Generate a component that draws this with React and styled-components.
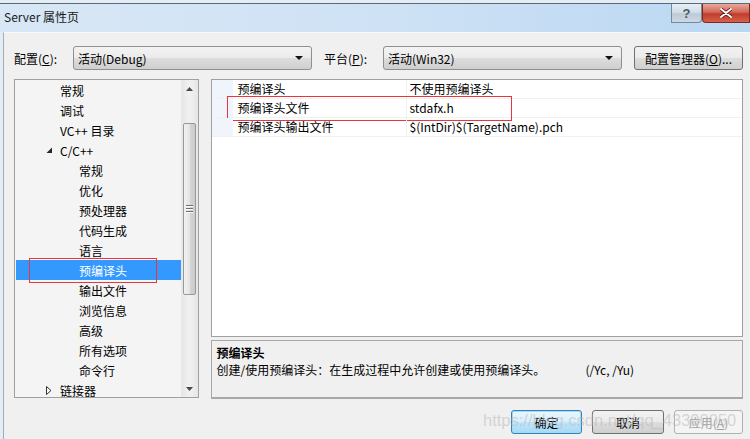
import React from "react";
import styled, { createGlobalStyle } from "styled-components";

const GlobalStyle = createGlobalStyle`
  html, body {
    margin: 0;
    padding: 0;
    background: #ffffff;
  }
  body {
    font-family: "Noto Sans CJK SC", "Noto Sans", sans-serif;
    font-size: 12px;
    color: #000;
  }
`;

const Page = styled.div`
  position: relative;
  width: 750px;
  height: 439px;
  overflow: hidden;
  background: #e4ecf4;
  display: flex;
  flex-direction: column;
`;

const TitleBar = styled.div`
  height: 28px;
  margin-top: 3px;
  border-top: 1px solid #5b6a78;
  background: linear-gradient(to right, #d8e7f5 0%, #cfe2f5 50%, #bad7f2 100%);
  display: flex;
  align-items: flex-start;
  padding-left: 4px;
`;

const TitleText = styled.div`
  line-height: 26px;
  color: #1a1a1a;
  flex: 1;
`;

const CaptionButton = styled.div`
  height: 18px;
  width: ${(p) => p.$w}px;
  display: flex;
  align-items: center;
  justify-content: center;
  border: 1px solid ${(p) => (p.$close ? "#7a2a22" : "#7b8896")};
  border-top: none;
  border-radius: 0 0 ${(p) => (p.$close ? "0 4px" : "4px 0")};
  background: ${(p) =>
    p.$close
      ? "linear-gradient(#e8a89c 0%, #d2685a 45%, #c23c2c 55%, #d6604a 100%)"
      : "linear-gradient(#e6eef6 0%, #d3dee9 45%, #bccad8 55%, #cdd9e4 100%)"};
  color: #4c5864;
  font-weight: bold;
  font-size: 13px;
  font-family: "Liberation Sans", sans-serif;
`;

const Body = styled.div`
  flex: 1;
  margin-left: 3px;
  border-left: 1px solid #a3adb8;
  border-top: 1px solid #f8f8f8;
  background: #f0f0f0;
  padding: 13px 7px 0 10px;
  display: flex;
  flex-direction: column;
`;

const ConfigRow = styled.div`
  display: flex;
  align-items: center;
  height: 24px;
`;

const Label = styled.div`
  width: ${(p) => p.$w}px;
  white-space: nowrap;
`;

const U = styled.span`
  text-decoration: underline;
`;

const Combo = styled.div`
  width: 239px;
  height: 24px;
  box-sizing: border-box;
  border: 1px solid #8e8f8f;
  border-radius: 3px;
  background: linear-gradient(#f3f3f3 0%, #ebebeb 48%, #dddddd 52%, #cfcfcf 100%);
  display: flex;
  align-items: center;
  padding: 0 8px 0 4px;
  margin-right: 12px;
`;

const ComboText = styled.div`
  flex: 1;
`;

const Arrow = styled.div`
  width: 0;
  height: 0;
  border-left: 4px solid transparent;
  border-right: 4px solid transparent;
  border-top: 4px solid #111;
`;

const Button = styled.div`
  width: ${(p) => p.$w}px;
  height: 24px;
  box-sizing: border-box;
  border: 1px solid ${(p) => (p.$default ? "#3c7fb1" : p.$disabled ? "#adb2b5" : "#707070")};
  border-radius: 3px;
  background: ${(p) =>
    p.$default
      ? "linear-gradient(#eaf6fd 0%, #d9f0fc 48%, #bee6fd 52%, #a7d9f5 100%)"
      : p.$disabled
      ? "#f4f4f4"
      : "linear-gradient(#f2f2f2 0%, #ebebeb 48%, #dddddd 52%, #cfcfcf 100%)"};
  box-shadow: ${(p) => (p.$default ? "inset 0 0 0 1px #9fdcfb" : "none")};
  color: ${(p) => (p.$disabled ? "#a0a0a0" : "#000")};
  display: flex;
  align-items: center;
  justify-content: center;
  white-space: nowrap;
`;

const Main = styled.div`
  display: flex;
  gap: 12px;
  margin-top: 9px;
  height: 320px;
`;

const TreePanel = styled.div`
  width: 186px;
  height: 319px;
  box-sizing: border-box;
  border: 1px solid #a0a0a0;
  background: #f4f4f4;
  display: flex;
`;

const TreeList = styled.div`
  flex: 1;
  padding-top: 0px;
`;

const TreeRow = styled.div`
  position: relative;
  height: 20px;
  display: flex;
  align-items: center;
  padding-left: ${(p) => 28 + p.$level * 19}px;
  margin-left: 1px;
  background: ${(p) => (p.$selected ? "#3399ff" : "transparent")};
  color: ${(p) => (p.$selected ? "#ffffff" : "#000")};
  white-space: nowrap;
`;

const ExpanderSlot = styled.div`
  width: 16px;
  height: 20px;
  display: flex;
  align-items: center;
  padding-left: 2px;
  box-sizing: border-box;
`;

const Mark = styled.div`
  position: absolute;
  left: 13px;
  top: -2px;
  width: 128px;
  height: 25px;
  box-sizing: border-box;
  border: 1px solid #e8343a;
  pointer-events: none;
`;

const ScrollBar = styled.div`
  width: 17px;
  background: linear-gradient(to right, #e6e6e6, #f1f1f1 50%, #e6e6e6);
  display: flex;
  flex-direction: column;
  align-items: center;
`;

const ScrollArrow = styled.div`
  height: 17px;
  width: 17px;
  display: flex;
  align-items: center;
  justify-content: center;
`;

const Thumb = styled.div`
  margin-top: 26px;
  width: 13px;
  height: 172px;
  box-sizing: border-box;
  border: 1px solid #979797;
  border-radius: 2px;
  background: linear-gradient(to right, #f2f2f2, #e4e4e4 50%, #d4d4d4 51%, #cccccc);
  display: flex;
  flex-direction: column;
  align-items: center;
  justify-content: center;
  gap: 1px;
`;

const GripLine = styled.div`
  width: 7px;
  height: 1px;
  background: #6f6f6f;
  box-shadow: 0 1px 0 #fafafa;
  margin-bottom: 1px;
`;

const Spacer = styled.div`
  flex: 1;
`;

const RightCol = styled.div`
  width: 533px;
  display: flex;
  flex-direction: column;
  gap: 3px;
`;

const GridPanel = styled.div`
  height: 258px;
  box-sizing: border-box;
  border: 1px solid #a0a0a0;
  background: #ffffff;
`;

const GridRow = styled.div`
  position: relative;
  display: grid;
  grid-template-columns: 21px 174px 1fr;
  height: 19px;
  box-sizing: border-box;
  border-bottom: 1px solid #f0f0f0;
`;

const GridMargin = styled.div`
  background: #f0f5fb;
`;

const GridName = styled.div`
  padding-left: 4px;
  line-height: 18px;
  border-right: 1px solid #f0f0f0;
  white-space: nowrap;
`;

const GridValue = styled.div`
  padding-left: 2px;
  line-height: 18px;
  white-space: nowrap;
`;

const GridMark = styled.div`
  position: absolute;
  left: 15px;
  top: -3px;
  width: 285px;
  height: 25px;
  box-sizing: border-box;
  border: 1px solid #e8343a;
  pointer-events: none;
`;

const DescPanel = styled.div`
  height: 59px;
  box-sizing: border-box;
  border: 1px solid #a8a8a8;
  border-bottom-width: 2px;
  background: #f0f0f0;
  padding: 3px 4px;
`;

const DescTitle = styled.div`
  font-weight: bold;
  line-height: 17px;
`;

const DescText = styled.div`
  display: flex;
  line-height: 18px;
  white-space: nowrap;
`;

const DescMain = styled.div`
  width: 369px;
`;

const Footer = styled.div`
  display: flex;
  justify-content: flex-end;
  gap: 10px;
  margin-top: 11px;
`;

const Watermark = styled.div`
  position: absolute;
  left: 483px;
  top: 411px;
  font-family: "Liberation Sans", sans-serif;
  font-size: 16.5px;
  color: rgba(185, 185, 185, 0.55);
  white-space: nowrap;
  pointer-events: none;
`;

const tree = [
  { label: "常规", level: 0 },
  { label: "调试", level: 0 },
  { label: "VC++ 目录", level: 0 },
  { label: "C/C++", level: 0, expander: "open" },
  { label: "常规", level: 1 },
  { label: "优化", level: 1 },
  { label: "预处理器", level: 1 },
  { label: "代码生成", level: 1 },
  { label: "语言", level: 1 },
  { label: "预编译头", level: 1, selected: true },
  { label: "输出文件", level: 1 },
  { label: "浏览信息", level: 1 },
  { label: "高级", level: 1 },
  { label: "所有选项", level: 1 },
  { label: "命令行", level: 1 },
  { label: "链接器", level: 0, expander: "closed" },
];

const props = [
  { name: "预编译头", value: "不使用预编译头" },
  { name: "预编译头文件", value: "stdafx.h", marked: true },
  { name: "预编译头输出文件", value: "$(IntDir)$(TargetName).pch" },
];

function Expander({ kind }) {
  if (kind === "open") {
    return (
      <svg width="7" height="7" viewBox="0 0 7 7">
        <path d="M6 0.5 L6 6 L0.5 6 Z" fill="#262626" />
      </svg>
    );
  }
  return (
    <svg width="6" height="9" viewBox="0 0 6 9">
      <path d="M0.5 0.5 L5 4.5 L0.5 8.5 Z" fill="#fff" stroke="#333" strokeWidth="1" />
    </svg>
  );
}

function SmallArrow({ up }) {
  return (
    <svg width="7" height="4" viewBox="0 0 7 4">
      <path d={up ? "M0 4 L3.5 0 L7 4 Z" : "M0 0 L3.5 4 L7 0 Z"} fill="#4a4a4a" />
    </svg>
  );
}

export default function App() {
  return (
    <>
      <GlobalStyle />
      <Page>
        <TitleBar>
          <TitleText>Server 属性页</TitleText>
          <CaptionButton $w={29}>?</CaptionButton>
          <CaptionButton $w={46} $close>
            <svg width="12" height="10" viewBox="0 0 12 10">
              <path
                d="M1 1 L11 9 M11 1 L1 9"
                stroke="#5a1a14"
                strokeWidth="3.6"
                strokeLinecap="round"
              />
              <path d="M1 1 L11 9 M11 1 L1 9" stroke="#fff" strokeWidth="2" strokeLinecap="round" />
            </svg>
          </CaptionButton>
        </TitleBar>
        <Body>
          <ConfigRow>
            <Label $w={59}>
              配置(<U>C</U>):
            </Label>
            <Combo>
              <ComboText>活动(Debug)</ComboText>
              <Arrow />
            </Combo>
            <Label $w={59}>
              平台(<U>P</U>):
            </Label>
            <Combo>
              <ComboText>活动(Win32)</ComboText>
              <Arrow />
            </Combo>
            <Button $w={109}>
              配置管理器(<U>O</U>)...
            </Button>
          </ConfigRow>
          <Main>
            <TreePanel>
              <TreeList>
                {tree.map((item, i) => (
                  <TreeRow key={i} $level={item.level} $selected={item.selected}>
                    <ExpanderSlot>{item.expander && <Expander kind={item.expander} />}</ExpanderSlot>
                    {item.label}
                    {item.selected && <Mark />}
                  </TreeRow>
                ))}
              </TreeList>
              <ScrollBar>
                <ScrollArrow>
                  <SmallArrow up />
                </ScrollArrow>
                <Thumb>
                  <GripLine />
                  <GripLine />
                  <GripLine />
                </Thumb>
                <Spacer />
                <ScrollArrow>
                  <SmallArrow />
                </ScrollArrow>
              </ScrollBar>
            </TreePanel>
            <RightCol>
              <GridPanel>
                {props.map((p, i) => (
                  <GridRow key={i}>
                    <GridMargin />
                    <GridName>{p.name}</GridName>
                    <GridValue>{p.value}</GridValue>
                    {p.marked && <GridMark />}
                  </GridRow>
                ))}
              </GridPanel>
              <DescPanel>
                <DescTitle>预编译头</DescTitle>
                <DescText>
                  <DescMain>创建/使用预编译头：在生成过程中允许创建或使用预编译头。</DescMain>
                  <span>(/Yc, /Yu)</span>
                </DescText>
              </DescPanel>
            </RightCol>
          </Main>
          <Footer>
            <Button $w={71} $default>
              确定
            </Button>
            <Button $w={72}>取消</Button>
            <Button $w={69} $disabled>
              应用(<U>A</U>)
            </Button>
          </Footer>
        </Body>
        <Watermark>https://blog.csdn.net/qq_43390050</Watermark>
      </Page>
    </>
  );
}
